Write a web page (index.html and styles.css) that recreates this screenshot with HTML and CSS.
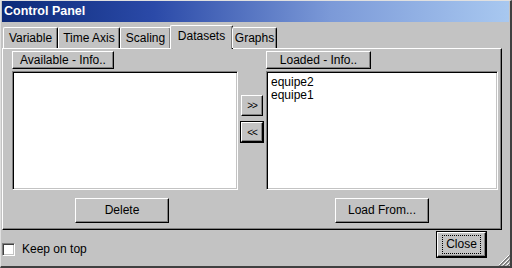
FILE: index.html
```html
<!DOCTYPE html>
<html>
<head>
<meta charset="utf-8">
<link rel="stylesheet" href="styles.css">
</head>
<body>
<div class="window">
  <div class="titlebar">Control Panel</div>
  <div class="tabs">
    <div class="tab t-var">Variable</div>
    <div class="tab t-time">Time Axis</div>
    <div class="tab t-scal">Scaling</div>
    <div class="tab t-data selected">Datasets</div>
    <div class="tab t-graph">Graphs</div>
  </div>
  <div class="panel">
    <div class="col left">
      <div class="btn hdr hdr-left">Available - Info..</div>
      <div class="listbox"></div>
      <div class="btn big del">Delete</div>
    </div>
    <div class="mid">
      <div class="btn arrow">&gt;&gt;</div>
      <div class="btn arrow dflt">&lt;&lt;</div>
    </div>
    <div class="col right">
      <div class="btn hdr hdr-right">Loaded - Info..</div>
      <div class="listbox">
        <div class="item">equipe2</div>
        <div class="item">equipe1</div>
      </div>
      <div class="btn big load">Load From...</div>
    </div>
  </div>
  <div class="footer">
    <label class="check"><span class="box"></span>Keep on top</label>
    <div class="btn close"><span class="focus">Close</span></div>
    <svg class="grip" width="12" height="12" viewBox="0 0 12 12">
      <path d="M11 1 L1 11 M11 5 L5 11 M11 9 L9 11" stroke="#fff" stroke-width="1"/>
      <path d="M12 1 L1 12 M12 2 L2 12 M12 5 L5 12 M12 6 L6 12 M12 9 L9 12 M12 10 L10 12" stroke="#808080" stroke-width="1"/>
    </svg>
  </div>
</div>
</body>
</html>
```

FILE: styles.css
```css
html, body {
  margin: 0;
  padding: 0;
  background: #c3c3c3;
}
body {
  font-family: "Liberation Sans", Arial, sans-serif;
  font-size: 11.5px;
  color: #000;
}
.window {
  position: relative;
  width: 512px;
  height: 268px;
  box-sizing: border-box;
  background: #c3c3c3;
  border-top: 1px solid #e0e0e0;
  border-left: 1px solid #e0e0e0;
  border-right: 2px solid #404040;
  border-bottom: 2px solid #404040;
  display: flex;
  flex-direction: column;
}
.titlebar {
  height: 21px;
  margin: 0 1px 0 1px;
  background: linear-gradient(to right, #0c2a78 0%, #2b4aa8 30%, #7c9ad8 65%, #a8c8f0 100%);
  color: #fff;
  font-weight: bold;
  font-size: 12.5px;
  line-height: 21px;
  padding-left: 2px;
}
.tabs {
  display: flex;
  align-items: flex-end;
  height: 24px;
  margin-top: 2px;
  padding-left: 2px;
  position: relative;
  z-index: 2;
}
.tab {
  height: 21px;
  line-height: 20px;
  text-align: center;
  border-top: 1px solid #fff;
  border-left: 1px solid #fff;
  border-right: 1px solid #000;
  box-shadow: inset -1px 0 0 #808080;
  border-radius: 2px 2px 0 0;
  box-sizing: border-box;
  font-size: 12px;
}
.t-var { width: 55px; }
.t-time { width: 62px; }
.t-scal { width: 51px; }
.t-data { width: 63px; }
.t-graph { width: 45px; }
.tab.selected {
  height: 24px;
  line-height: 20px;
  margin-bottom: -1px;
  margin-left: -1px;
  margin-right: -1px;
  background: #c3c3c3;
}
.panel {
  width: 500px;
  height: 182px;
  margin-left: 1px;
  box-sizing: border-box;
  border-top: 1px solid #fff;
  border-left: 1px solid #fff;
  border-right: 1px solid #000;
  border-bottom: 1px solid #000;
  box-shadow: inset -1px -1px 0 #808080;
  display: grid;
  grid-template-columns: 226px 28px 232px;
  padding: 2px 0 0 9px;
}
.col {
  display: flex;
  flex-direction: column;
}
.btn {
  box-sizing: border-box;
  border-top: 1px solid #fff;
  border-left: 1px solid #fff;
  border-right: 1px solid #000;
  border-bottom: 1px solid #000;
  box-shadow: inset -1px -1px 0 #808080;
  text-align: center;
  background: #c3c3c3;
}
.hdr {
  height: 18px;
  line-height: 16px;
  font-size: 12px;
}
.hdr-left { width: 102px; }
.hdr-right { width: 105px; }
.listbox {
  margin-top: 2px;
  height: 119px;
  background: #fff;
  box-sizing: border-box;
  border-top: 1px solid #808080;
  border-left: 1px solid #808080;
  border-right: 1px solid #fff;
  border-bottom: 1px solid #fff;
  box-shadow: inset 1px 1px 0 #000, inset -1px -1px 0 #c3c3c3;
  padding: 4px 0 0 4px;
  font-size: 12px;
}
.item {
  height: 13px;
  line-height: 13px;
}
.big {
  height: 25px;
  line-height: 23px;
  width: 94px;
  margin-top: 8px;
  font-size: 12px;
}
.del { margin-left: 63px; }
.load { margin-left: 69px; }
.mid {
  display: flex;
  flex-direction: column;
  align-items: center;
  padding-top: 44px;
  gap: 6px;
}
.arrow {
  width: 22px;
  height: 21px;
  line-height: 19px;
  font-size: 10px;
  letter-spacing: -1px;
}
.arrow.dflt {
  outline: 1px solid #000;
  height: 20px;
}
.footer {
  flex: 1;
  display: flex;
  align-items: flex-start;
  position: relative;
}
.check {
  display: flex;
  align-items: center;
  margin-top: 12px;
  margin-left: 1px;
  font-size: 12px;
}
.box {
  width: 13px;
  height: 13px;
  box-sizing: border-box;
  background: #fff;
  border-top: 1px solid #808080;
  border-left: 1px solid #808080;
  border-right: 1px solid #fff;
  border-bottom: 1px solid #fff;
  box-shadow: inset 1px 1px 0 #404040, inset -1px -1px 0 #c3c3c3;
  margin-right: 7px;
}
.close {
  margin-left: auto;
  margin-right: 24px;
  margin-top: 2px;
  width: 49px;
  height: 25px;
  outline: 1px solid #000;
  display: flex;
  align-items: center;
  justify-content: center;
  font-size: 12px;
}
.focus {
  border: 1px dotted #000;
  padding: 1px 3px;
  line-height: 15px;
}
.grip {
  position: absolute;
  right: 0;
  bottom: 0;
}
```
